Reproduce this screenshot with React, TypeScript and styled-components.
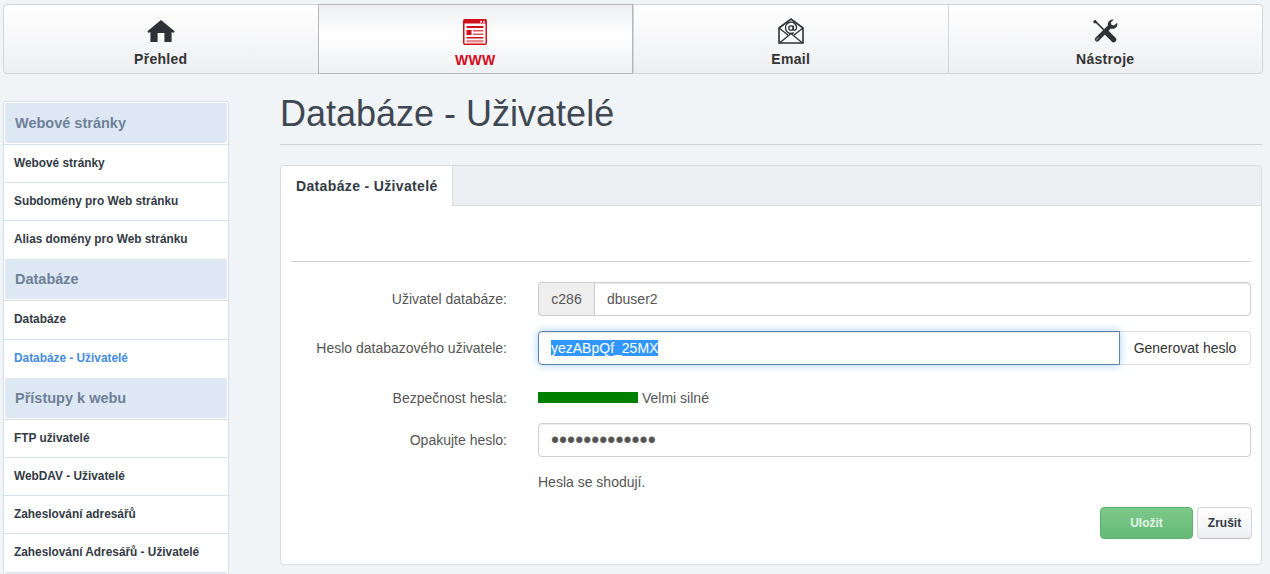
import React, { FunctionComponent, useEffect, useRef } from 'react';
import styled, { createGlobalStyle } from 'styled-components';

const GlobalStyle = createGlobalStyle`
  html, body {
    margin: 0;
    height: 574px;
    overflow: hidden;
    background: #f1f4f7;
    font-family: "Liberation Sans", Arial, sans-serif;
    color: #555;
  }
  * { box-sizing: border-box; }
`;

const TopNav = styled.nav`
  display: flex;
  width: 1260px;
  height: 70px;
  margin: 4px 0 0 3px;
  border: 1px solid #d3d6d9;
  border-radius: 4px;
  background: linear-gradient(#ffffff, #eeeff2);
`;

const TopTab = styled.a<{ $active?: boolean }>`
  flex: 1;
  display: flex;
  flex-direction: column;
  align-items: center;
  height: 100%;
  padding-top: 12px;
  font-size: 14px;
  font-weight: bold;
  letter-spacing: 0.3px;
  color: ${props => (props.$active ? '#d2091b' : '#333')};
  border-left: 1px solid ${props => (props.$active ? '#b4b6b8' : '#d3d6d9')};
  border-right: ${props => (props.$active ? '1px solid #b4b6b8' : 'none')};
  ${props => props.$active && `
    margin: -1px 0;
    height: calc(100% + 2px);
    padding-top: 13px;
    border-top: 1px solid #b4b6b8;
    border-bottom: 1px solid #b4b6b8;
    background: linear-gradient(#eeeff2, #ffffff 45%, #eff0f3);
  `}
  &:first-child { border-left: none; }
`;

const TabIcon = styled.div`
  height: 28px;
  display: flex;
  align-items: center;
  justify-content: center;
  margin-bottom: 6px;
`;

const Page = styled.div`
  display: flex;
  align-items: flex-start;
  height: 500px;
  overflow: hidden;
  padding-left: 3px;
`;

const Sidebar = styled.aside`
  width: 226px;
  flex: none;
  margin-top: 27px;
  border: 1px solid #d5e0ec;
  border-radius: 3px;
  background: #fff;
  padding-top: 1px;
`;

const SideHeader = styled.div`
  height: 40px;
  margin: 0 1px;
  padding-left: 10px;
  line-height: 40px;
  font-size: 14.5px;
  font-weight: bold;
  color: #6d8097;
  background: #dee8f5;
  border-radius: 2px;
`;

const SideItem = styled.a<{ $active?: boolean; $tall?: boolean }>`
  display: block;
  height: ${props => (props.$tall ? 39 : 38)}px;
  padding-left: 10px;
  line-height: 37px;
  font-size: 11.85px;
  font-weight: bold;
  color: ${props => (props.$active ? '#428bdf' : '#333a45')};
  border-bottom: 1px solid #d5e0ec;
  &:has(+ div) { border-bottom: none; }
  div + & {
    margin-top: 1px;
    height: ${props => (props.$tall ? 40 : 39)}px;
    border-top: 1px solid #d5e0ec;
  }
`;

const Main = styled.main`
  width: 982px;
  margin-left: 51px;
  flex: none;
`;

const Title = styled.h1`
  margin: 0;
  height: 71px;
  padding-top: 20px;
  font-size: 36px;
  line-height: 40px;
  font-weight: normal;
  color: #3f4852;
  border-bottom: 1px solid #cfd3d7;
`;

const Panel = styled.section`
  margin-top: 20px;
  height: 400px;
  background: #fff;
  border: 1px solid #d9dcdf;
  border-radius: 4px;
`;

const TabBar = styled.div`
  height: 40px;
  display: flex;
  background: #edeef1;
  border-bottom: 1px solid #d9dcdf;
  border-radius: 4px 4px 0 0;
`;

const PanelTab = styled.div`
  width: 172px;
  height: 40px;
  padding-left: 15px;
  line-height: 40px;
  font-size: 14px;
  font-weight: bold;
  letter-spacing: 0.35px;
  white-space: nowrap;
  color: #333a45;
  background: #fff;
  border-right: 1px solid #d9dcdf;
  border-radius: 4px 0 0 0;
`;

const PanelBody = styled.div`
  padding: 55px 10px 0;
`;

const Divider = styled.hr`
  margin: 0 0 20px;
  border: none;
  border-top: 1px solid #cfd3d7;
`;

const FormRow = styled.div<{ $mb?: number; $height?: number }>`
  display: grid;
  grid-template-columns: 216px 1fr;
  column-gap: 31px;
  align-items: center;
  height: ${props => props.$height ?? 34}px;
  margin-bottom: ${props => props.$mb ?? 15}px;
`;

const Label = styled.label`
  font-size: 14px;
  text-align: right;
  color: #555;
`;

const InputGroup = styled.div`
  display: flex;
  height: 34px;
`;

const Addon = styled.span`
  width: 56px;
  flex: none;
  text-align: center;
  line-height: 32px;
  font-size: 14px;
  color: #555;
  background: #eee;
  border: 1px solid #ccc;
  border-right: none;
  border-radius: 4px 0 0 4px;
`;

const Input = styled.input<{ $joined?: 'left' | 'right' }>`
  flex: 1;
  min-width: 0;
  width: 100%;
  height: 34px;
  padding: 6px 12px;
  font: 14px "Liberation Sans", Arial, sans-serif;
  color: #555;
  background: #fff;
  border: 1px solid #ccc;
  outline: none;
  border-radius: ${props =>
    props.$joined === 'left' ? '0 4px 4px 0' : props.$joined === 'right' ? '4px 0 0 4px' : '4px'};
  box-shadow: inset 0 1px 1px rgba(0, 0, 0, 0.075);
  &:focus {
    position: relative;
    border-color: #5b84ad;
    box-shadow: inset 0 1px 1px rgba(0, 0, 0, 0.075), 0 0 8px rgba(102, 175, 233, 0.6);
  }
  &::selection {
    color: #fff;
    background: #3297fd;
  }
`;

// Chrome draws the password discs much smaller than the original, so the size comes from the font
const PasswordInput = styled(Input)`
  padding: 0 12px;
  font-size: 23px;
`;

const GenerateButton = styled.button`
  width: 131px;
  flex: none;
  font: 14px "Liberation Sans", Arial, sans-serif;
  color: #333;
  background: #fff;
  border: 1px solid #ddd;
  border-left: none;
  border-radius: 0 4px 4px 0;
  padding: 0;
`;

const Strength = styled.div`
  display: flex;
  align-items: center;
  gap: 4px;
  font-size: 14px;
  color: #555;
`;

const StrengthBar = styled.div`
  width: 100px;
  height: 11px;
  background: #008000;
`;

const Match = styled.div`
  margin-left: 247px;
  height: 17px;
  font-size: 14px;
  line-height: 17px;
  color: #555;
`;

const Actions = styled.div`
  display: flex;
  justify-content: flex-end;
  gap: 4px;
  margin: 16px -1px 0 0;
`;

const SaveButton = styled.button`
  width: 93px;
  height: 32px;
  padding: 0;
  font: bold 12px "Liberation Sans", Arial, sans-serif;
  color: #e3f3e4;
  background: linear-gradient(#7cc98a, #66b977);
  border: 1px solid #5fb06f;
  border-radius: 4px;
`;

const CancelButton = styled.button`
  width: 55px;
  height: 32px;
  padding: 0;
  font: bold 12px "Liberation Sans", Arial, sans-serif;
  color: #333a45;
  background: linear-gradient(#ffffff, #eeeff2);
  border: 1px solid #d3d6d9;
  border-bottom-color: #bcbfc2;
  border-radius: 4px;
`;

const HomeIcon = () => (
  <svg width="28" height="22" viewBox="0 0 28 22">
    <path fill="#2f3136" d="M14 0 L27.6 11.2 L26.4 13 L24.6 12 V22 H17.4 V13 H10.6 V22 H3.4 V12 L1.6 13 L.4 11.2 Z" />
  </svg>
);

const WebIcon = () => (
  <svg width="24" height="26" viewBox="0 0 24 26">
    <rect x="0.75" y="0.75" width="22.5" height="24.5" rx="1" fill="#fff" stroke="#cf0f1c" strokeWidth="1.5" />
    <rect x="1" y="1" width="22" height="3.5" fill="#cf0f1c" />
    <rect x="17" y="1.8" width="2" height="2" fill="#f5c6c9" />
    <rect x="20" y="1.8" width="2" height="2" fill="#f5c6c9" />
    <rect x="3.5" y="7" width="17" height="2" fill="#cf0f1c" />
    <rect x="3.5" y="11" width="5" height="5" fill="#cf0f1c" />
    <rect x="10" y="11" width="10.5" height="1.5" fill="#d9535c" />
    <rect x="10" y="14.5" width="10.5" height="1.5" fill="#d9535c" />
    <rect x="3.5" y="18" width="17" height="1.5" fill="#cf0f1c" />
    <rect x="3.5" y="21" width="17" height="2.5" fill="#e58a91" />
  </svg>
);

const MailIcon = () => (
  <svg width="26" height="26" viewBox="0 0 26 26" fill="none" stroke="#2f3136">
    <path strokeWidth="1.6" d="M1 10 L13 1 L25 10 V25 H1 Z" />
    <path strokeWidth="1.3" d="M1 10 L10 17 M25 10 L16 17 M1.5 25 L13 15.5 L24.5 25" />
    <circle cx="13" cy="10" r="2.2" strokeWidth="1.3" />
    <path strokeWidth="1.3" d="M15.2 7.6 V11 Q15.2 12.6 16.8 12.2 Q18.6 11.6 18.6 9.6 A5.6 5.6 0 1 0 15.8 14.6" />
  </svg>
);

const ToolsIcon = () => (
  <svg width="25" height="24" viewBox="0 0 25 24" fill="none" stroke="#2f3136" strokeLinecap="round">
    <path strokeWidth="4.4" d="M4 20.4 L15.6 8.8" />
    <path fill="#2f3136" stroke="none" d="M24.2 3.8 Q24.9 7.6 22 9.2 Q19.6 10.4 17.4 9.4 L14.8 7 Q14.2 3.6 16.4 1.8 Q18.4 .2 21 .6 L17.8 3.2 L18.4 5.8 L21 6.6 Z" />
    <path strokeWidth="1.6" strokeLinecap="butt" d="M1.6 1.6 L12 12" />
    <path strokeWidth="3" strokeLinecap="butt" d="M1 1.8 L3 3.8" />
    <path strokeWidth="5.4" d="M13.4 13.4 L20.6 20.6" />
    <path stroke="#8b8d91" strokeWidth="1.2" d="M3 21.2 L5.2 19" />
  </svg>
);

const tabs = [
  { name: 'Přehled', Icon: HomeIcon },
  { name: 'WWW', Icon: WebIcon, active: true },
  { name: 'Email', Icon: MailIcon },
  { name: 'Nástroje', Icon: ToolsIcon }
];

const menu = [
  { title: 'Webové stránky', items: ['Webové stránky', 'Subdomény pro Web stránku', 'Alias domény pro Web stránku'] },
  { title: 'Databáze', items: ['Databáze', 'Databáze - Uživatelé'] },
  { title: 'Přístupy k webu', items: ['FTP uživatelé', 'WebDAV - Uživatelé', 'Zaheslování adresářů', 'Zaheslování Adresářů - Uživatelé'] }
];

const App: FunctionComponent = () => {
  const passwordRef = useRef<HTMLInputElement>(null);

  useEffect(() => {
    passwordRef.current?.focus();
    passwordRef.current?.select();
  }, []);

  return (
    <>
      <GlobalStyle />
      <TopNav>
        {tabs.map(({ name, Icon, active }) => (
          <TopTab key={name} $active={active}>
            <TabIcon><Icon /></TabIcon>
            {name}
          </TopTab>
        ))}
      </TopNav>
      <Page>
        <Sidebar>
          {menu.map(({ title, items }) => (
            <React.Fragment key={title}>
              <SideHeader>{title}</SideHeader>
              {items.map(item => (
                <SideItem
                  key={item}
                  $active={item === 'Databáze - Uživatelé'}
                  $tall={item === 'Databáze'}
                >
                  {item}
                </SideItem>
              ))}
            </React.Fragment>
          ))}
          <SideHeader />
        </Sidebar>
        <Main>
          <Title>Databáze - Uživatelé</Title>
          <Panel>
            <TabBar>
              <PanelTab>Databáze - Uživatelé</PanelTab>
            </TabBar>
            <PanelBody>
              <Divider />
              <FormRow>
                <Label>Uživatel databáze:</Label>
                <InputGroup>
                  <Addon>c286</Addon>
                  <Input $joined="left" readOnly value="dbuser2" />
                </InputGroup>
              </FormRow>
              <FormRow>
                <Label>Heslo databazového uživatele:</Label>
                <InputGroup>
                  <Input ref={passwordRef} $joined="right" readOnly value="yezABpQf_25MX" />
                  <GenerateButton>Generovat heslo</GenerateButton>
                </InputGroup>
              </FormRow>
              <FormRow $mb={8} $height={35}>
                <Label>Bezpečnost hesla:</Label>
                <Strength>
                  <StrengthBar />
                  Velmi silné
                </Strength>
              </FormRow>
              <FormRow $mb={17}>
                <Label>Opakujte heslo:</Label>
                <PasswordInput type="password" readOnly value="yezABpQf_25MX" />
              </FormRow>
              <Match>Hesla se shodují.</Match>
              <Actions>
                <SaveButton>Uložit</SaveButton>
                <CancelButton>Zrušit</CancelButton>
              </Actions>
            </PanelBody>
          </Panel>
        </Main>
      </Page>
    </>
  );
};

export default App;
